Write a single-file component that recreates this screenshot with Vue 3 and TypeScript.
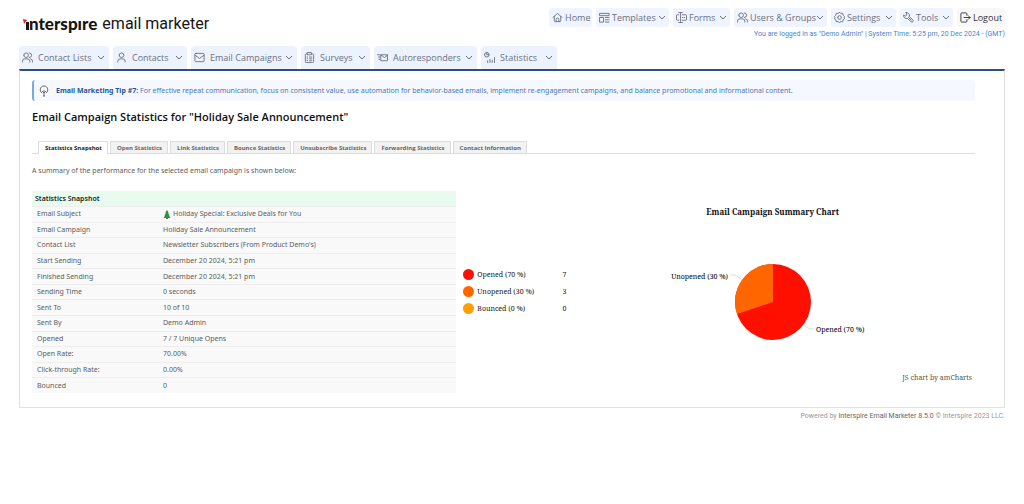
<script setup lang="ts">
interface NavItem { label: string; icon: string; menu: boolean; cls: string }

const topNav: NavItem[] = [
  { label: 'Home', icon: 'home', menu: false, cls: 'home' },
  { label: 'Templates', icon: 'templates', menu: true, cls: 'templates' },
  { label: 'Forms', icon: 'forms', menu: true, cls: 'forms' },
  { label: 'Users & Groups', icon: 'users', menu: true, cls: 'groups' },
  { label: 'Settings', icon: 'settings', menu: true, cls: 'settings' },
  { label: 'Tools', icon: 'tools', menu: true, cls: 'tools' },
  { label: 'Logout', icon: 'logout', menu: false, cls: 'logout' },
]
const mainNav: NavItem[] = [
  { label: 'Contact Lists', icon: 'users', menu: true, cls: 'lists' },
  { label: 'Contacts', icon: 'user', menu: true, cls: 'contacts' },
  { label: 'Email Campaigns', icon: 'mail', menu: true, cls: 'campaigns' },
  { label: 'Surveys', icon: 'clipboard', menu: true, cls: 'surveys' },
  { label: 'Autoresponders', icon: 'send', menu: true, cls: 'responders' },
  { label: 'Statistics', icon: 'stats', menu: true, cls: 'stats' },
]
const icons: Record<string, string[]> = {
  home: ['M2 12 12 3l10 9', 'M5 10v9a2 2 0 0 0 2 2h10a2 2 0 0 0 2-2v-9', 'M9 21v-5a3 3 0 0 1 6 0v5'],
  templates: ['M2 3h20v5H2z', 'M2 12h8v10H2z', 'M14 12h8M14 17h8M14 22h8'],
  forms: ['M10 1v22M6 1h8M6 23h8', 'M6 6H3a2 2 0 0 0-2 2v8a2 2 0 0 0 2 2h3', 'M14 6h7a2 2 0 0 1 2 2v8a2 2 0 0 1-2 2h-7', 'M14 12h1M18 12h1'],
  users: ['M4 7a5 5 0 1 0 10 0a5 5 0 1 0-10 0', 'M1 22v-2a5 5 0 0 1 5-5h6a5 5 0 0 1 5 5v2', 'M16 2a5 5 0 0 1 0 10', 'M19 15a5 5 0 0 1 4 5v2'],
  user: ['M7 7a5 5 0 1 0 10 0a5 5 0 1 0-10 0', 'M4 22v-2a5 5 0 0 1 5-5h6a5 5 0 0 1 5 5v2'],
  mail: ['M4 3h16a2 2 0 0 1 2 2v14a2 2 0 0 1-2 2H4a2 2 0 0 1-2-2V5a2 2 0 0 1 2-2z', 'M2 7l10 7 10-7'],
  clipboard: ['M8 4H5a2 2 0 0 0-2 2v15a2 2 0 0 0 2 2h14a2 2 0 0 0 2-2V6a2 2 0 0 0-2-2h-3', 'M8 1h8v5H8z', 'M7 11h1M12 11h5M7 15h1M12 15h5M7 19h1M12 19h5'],
  send: ['M9 6h14v13H9z', 'M9 7l7 5 7-5', 'M1 6h5M3 11h3M4 16h2'],
  stats: ['M1 6a5 5 0 1 0 10 0a5 5 0 1 0-10 0', 'M6 1v5h5', 'M8 23v-4M13 23v-7M18 23v-5M23 23V12'],
  settings: ['M12 1l3 2 4 0 1 4 3 3-1 2 1 3-3 2-1 4-4 0-3 2-3-2-4 0-1-4-3-2 1-3-1-2 3-3 1-4 4 0z', 'M8 12a4 4 0 1 0 8 0a4 4 0 1 0-8 0'],
  tools: ['M7 1l1 6-2 2-5-2a7 7 0 0 0 9 7l8 8a3 3 0 0 0 4-4l-8-8A7 7 0 0 0 7 1z', 'M12 12l6 6'],
  logout: ['M15 7V4a2 2 0 0 0-2-2H4a2 2 0 0 0-2 2v16a2 2 0 0 0 2 2h9a2 2 0 0 0 2-2v-3', 'M9 12h13M18 8l4 4-4 4'],
}
const tabs: string[] = ['Statistics Snapshot', 'Open Statistics', 'Link Statistics', 'Bounce Statistics', 'Unsubscribe Statistics', 'Forwarding Statistics', 'Contact Information']
const rows: [string, string][] = [
  ['Email Subject', 'Holiday Special: Exclusive Deals for You'],
  ['Email Campaign', 'Holiday Sale Announcement'],
  ['Contact List', "Newsletter Subscribers (From Product Demo's)"],
  ['Start Sending', 'December 20 2024, 5:21 pm'],
  ['Finished Sending', 'December 20 2024, 5:21 pm'],
  ['Sending Time', '0 seconds'],
  ['Sent To', '10 of 10'],
  ['Sent By', 'Demo Admin'],
  ['Opened', '7 / 7 Unique Opens'],
  ['Open Rate:', '70.00%'],
  ['Click-through Rate:', '0.00%'],
  ['Bounced', '0'],
]
const legend = [
  { label: 'Opened (70 %)', value: 7, cls: 'red' },
  { label: 'Unopened (30 %)', value: 3, cls: 'orange' },
  { label: 'Bounced (0 %)', value: 0, cls: 'amber' },
]
</script>

<template>
  <div class="page">
    <header class="header">
      <a class="logo" href="#">
        <svg class="mark" viewBox="0 0 6 16"><path d="M0 3l4 1-3 4z" fill="#e3202b" /><path d="M3 6h3v8H3z" fill="#161616" /></svg>
        <strong>nterspıre</strong><span>email marketer</span>
      </a>
      <div class="account">
        <nav class="top-nav">
          <button v-for="item in topNav" :key="item.label" type="button" :class="item.cls">
            <svg class="icon" viewBox="0 0 24 24"><path v-for="d in icons[item.icon]" :key="d" :d="d" /></svg>
            <span>{{ item.label }}</span>
            <svg v-if="item.menu" class="chevron" viewBox="0 0 8 8"><path d="M1 2l3 3 3-3" /></svg>
          </button>
        </nav>
        <p class="session">You are logged in as "Demo Admin" | System Time: 5:25 pm, 20 Dec 2024 - (GMT)</p>
      </div>
    </header>

    <nav class="main-nav">
      <button v-for="item in mainNav" :key="item.label" type="button" :class="item.cls">
        <svg class="icon" viewBox="0 0 24 24"><path v-for="d in icons[item.icon]" :key="d" :d="d" /></svg>
        <span>{{ item.label }}</span>
        <svg class="chevron" viewBox="0 0 8 8"><path d="M1 2l3 3 3-3" /></svg>
      </button>
    </nav>

    <main class="panel">
      <div class="tip">
        <svg class="bulb" viewBox="0 0 10 12"><path d="M3 8C0 6 1 1 5 1s5 5 2 7M5 11V5M3 6l2 2 2-2M4 11h2" /></svg>
        <p><strong>Email Marketing Tip #7:</strong> For effective repeat communication, focus on consistent value, use automation for behavior-based emails, implement re-engagement campaigns, and balance promotional and informational content.</p>
      </div>
      <h1>Email Campaign Statistics for "Holiday Sale Announcement"</h1>
      <div class="tabs" role="tablist">
        <button v-for="(tab, i) in tabs" :key="tab" type="button" role="tab" :aria-selected="i === 0" :class="['tab', { active: i === 0 }]">{{ tab }}</button>
      </div>
      <p class="intro">A summary of the performance for the selected email campaign is shown below:</p>
      <div class="content">
        <table class="snapshot">
          <colgroup><col class="name-col"><col></colgroup>
          <thead><tr><th colspan="2">Statistics Snapshot</th></tr></thead>
          <tbody>
            <tr v-for="([name, value], i) in rows" :key="name">
              <td class="name">{{ name }}</td>
              <td>
                <svg v-if="i === 0" class="tree" viewBox="0 0 8 10"><path d="M3 8h2v2H3z" fill="#79523a" /><path d="M4 0l2 3H5l2 3H6l2 3H0l2-3H1l2-3H2z" fill="#2c9440" /></svg>
                <span>{{ value }}</span>
              </td>
            </tr>
          </tbody>
        </table>
        <ul class="legend">
          <li v-for="entry in legend" :key="entry.label">
            <i :class="['dot', entry.cls]"></i><span class="legend-label">{{ entry.label }}</span><span>{{ entry.value }}</span>
          </li>
        </ul>
        <figure class="chart">
          <figcaption>Email Campaign Summary Chart</figcaption>
          <svg class="pie" viewBox="0 0 210 90" role="img" aria-label="Opened 70 %, unopened 30 %">
            <circle cx="105" cy="45" r="38" fill="#ff0f00" />
            <path d="M105 45V7A38 38 0 0 0 69 57z" fill="#ff6600" />
            <path class="lead" d="M62 18h5l6 4M136 68l6 4h4" />
            <text x="60" y="22" text-anchor="end">Unopened (30 %)</text>
            <text x="148" y="75">Opened (70 %)</text>
          </svg>
          <a class="credit" href="#">JS chart by amCharts</a>
        </figure>
      </div>
    </main>
    <footer>Powered by <a href="#">Interspire Email Marketer 8.5.0</a> © Interspire 2023 LLC.</footer>
  </div>
</template>

<style>
body { margin: 0; background: #fff; }
</style>

<style scoped>
* { box-sizing: border-box; }
.page { padding: 8px 19px 0; font-family: "Noto Sans", "Open Sans", sans-serif; font-size: 7px; line-height: 10px; color: #5c5c5c; }
p, h1, ul, figure { margin: 0; padding: 0; }
a { color: inherit; text-decoration: none; }
button { font: inherit; border: 0; margin: 0; cursor: pointer; color: #6b7180; white-space: nowrap; }
.header { display: flex; justify-content: space-between; height: 38px; }
.logo { display: flex; align-items: center; height: 32px; padding-left: 4px; color: #161616; line-height: 20px; }
.logo strong { font-family: Lato, sans-serif; font-size: 17px; font-weight: 900; }
.logo span { margin-left: 5px; font-family: Roboto, sans-serif; font-size: 16px; }
.mark { width: 6px; height: 16px; }
.account { display: flex; flex-direction: column; align-items: flex-end; }
.top-nav { display: flex; gap: 4px; }
.top-nav button { display: flex; align-items: center; height: 19px; padding: 0 3px; background: #f0f4fe; border-radius: 3px; font-family: "Open Sans", sans-serif; font-size: 9px; font-weight: 500; }
.top-nav .logout { background: #f8f8f9; color: #333; }
.icon { width: 11px; height: 11px; flex: none; fill: none; stroke: currentColor; stroke-width: 2; stroke-linecap: round; stroke-linejoin: round; }
.chevron { width: 8px; height: 8px; flex: none; margin-left: auto; fill: none; stroke: currentColor; stroke-width: 1; }
.top-nav .icon { margin-right: 2px; }
.top-nav button span { flex: 1; text-align: left; }
.home { width: 43px; } .templates { width: 73px; } .forms { width: 57px; } .groups { width: 93px; }
.settings { width: 65px; } .tools { width: 53px; } .logout { width: 48px; }
.session { margin-top: 2px; font-family: Roboto, sans-serif; color: #4a84cf; }
.main-nav { display: flex; gap: 4px; }
.main-nav button { display: flex; align-items: center; height: 23px; padding: 0 4px 0 3px; background: #edf3fe; border-radius: 4px 4px 0 0; font-family: "Open Sans", sans-serif; font-size: 9px; font-weight: 500; }
.main-nav .icon { margin-right: 5px; }
.lists { width: 90px; } .contacts { width: 74px; } .campaigns { width: 106px; } .surveys { width: 69px; } .responders { width: 103px; } .main-nav .stats { width: 76px; }
.panel { border: 1px solid #e2e2e2; border-top: 2px solid #2d4e80; padding: 9px 29px 14px 12px; }
.tip { display: flex; align-items: center; height: 21px; padding-left: 5px; border-left: 2px solid #7aa7f0; border-radius: 3px; background: #f5f9ff; color: #4a76b4; }
.tip strong { color: #2456a0; }
.bulb { width: 10px; height: 12px; margin-right: 7px; fill: none; stroke: #666; stroke-width: 1; }
h1 { margin-top: 9px; font-family: "Open Sans", sans-serif; font-size: 11px; line-height: 14px; font-weight: 600; color: #111; }
.tabs { display: flex; gap: 2px; margin-top: 17px; padding-left: 6px; border-bottom: 1px solid #ddd; }
.tab { height: 12px; padding: 0 5px 0 6px; border: 1px solid #ddd; border-bottom: 0; background: #f2f2f2; font-family: "Open Sans", sans-serif; font-size: 6px; line-height: 10px; font-weight: 700; color: #666; }
.tab.active { height: 13px; margin-bottom: -1px; background: #fff; color: #222; }
.intro { margin-top: 12px; }
.content { display: flex; margin-top: 15px; }
.snapshot { width: 45%; height: 202px; border-spacing: 0; table-layout: fixed; background: #f9f9f9; align-self: flex-start; }
.name-col { width: 131px; }
.snapshot th { height: 15px; padding: 0 3px; background: #e9fbef; text-align: left; color: #222; font-weight: 600; }
.snapshot td { padding: 2px 0; border-top: 1px solid #eee; }
.snapshot .name { padding-left: 5px; }
.tree { width: 8px; height: 9px; margin-right: 2px; vertical-align: middle; }
.legend { list-style: none; margin-top: 75px; padding-left: 7px; width: 110px; font-family: "Noto Serif", "DejaVu Serif", serif; color: #222; }
.legend li { display: flex; align-items: center; height: 17px; }
.dot { width: 11px; height: 11px; margin-right: 3px; border-radius: 50%; }
.red { background: #ff0f00; } .orange { background: #ff6600; } .amber { background: #ff9e01; }
.legend-label { flex: 1; }
.chart { flex: 1; display: flex; flex-direction: column; align-items: center; margin-top: 15px; padding-right: 3px; padding-left: 7px; font-family: "Noto Serif", "DejaVu Serif", serif; color: #222; }
figcaption { font-size: 8px; line-height: 11px; font-weight: 700; color: #111; }
.pie { width: 210px; height: 90px; margin-top: 40px; overflow: visible; font-size: 7px; }
.lead { fill: none; stroke: #ddd; stroke-width: 1; }
.credit { align-self: flex-end; margin-top: 26px; color: #555; }
footer { margin-top: 3px; font-family: Roboto, sans-serif; text-align: right; color: #999; }
footer a { color: #666; }
</style>
